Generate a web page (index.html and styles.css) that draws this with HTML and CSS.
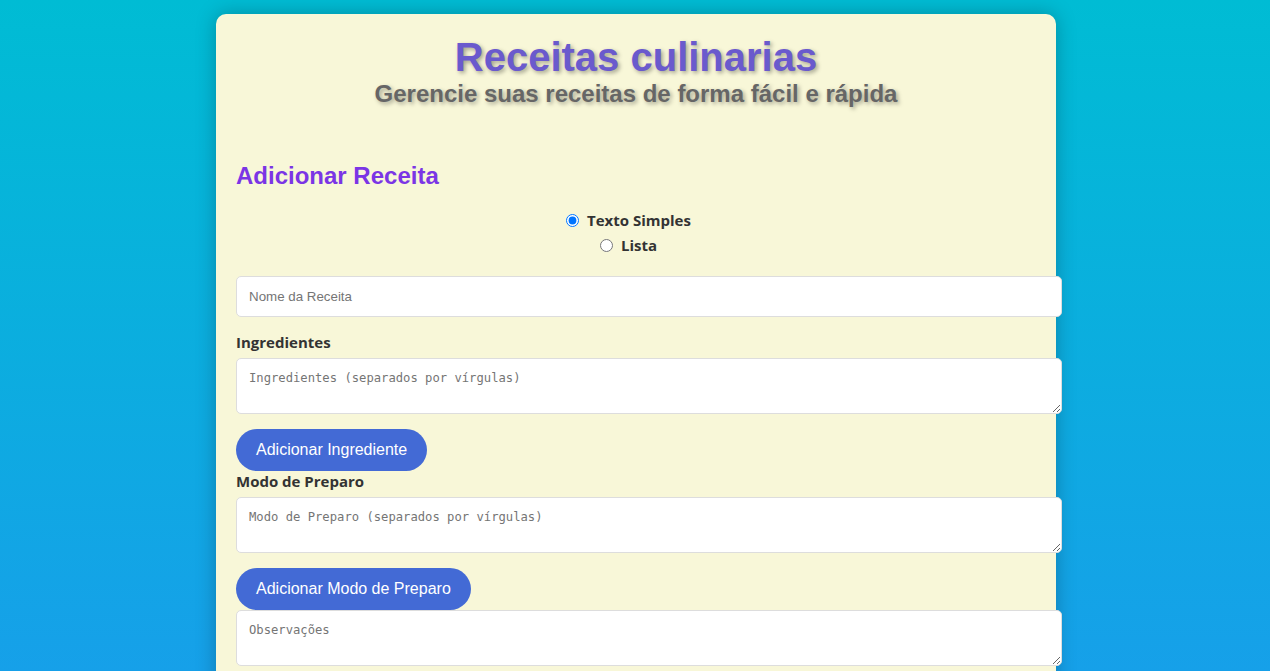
FILE: index.html
```html
<!DOCTYPE html>
<html lang="pt">
<head>
<meta charset="utf-8">
<title>Receitas culinarias</title>
<link rel="stylesheet" href="styles.css">
</head>
<body>
<div class="container">
  <header class="header">
    <h1 class="title">Receitas culinarias</h1>
    <p class="subtitle">Gerencie suas receitas de forma fácil e rápida</p>
  </header>
  <section class="form-section">
    <h2 class="section-title">Adicionar Receita</h2>
    <div class="mode-options">
      <label class="mode-option"><input type="radio" name="mode" checked> Texto Simples</label>
      <label class="mode-option"><input type="radio" name="mode"> Lista</label>
    </div>
    <input class="field" type="text" placeholder="Nome da Receita">
    <label class="field-label">Ingredientes</label>
    <textarea class="field area" placeholder="Ingredientes (separados por vírgulas)"></textarea>
    <button class="btn">Adicionar Ingrediente</button>
    <label class="field-label">Modo de Preparo</label>
    <textarea class="field area" placeholder="Modo de Preparo (separados por vírgulas)"></textarea>
    <button class="btn">Adicionar Modo de Preparo</button>
    <textarea class="field area" placeholder="Observações"></textarea>
  </section>
</div>
</body>
</html>
```
FILE: styles.css
```css
html {
  min-height: 100%;
}
body {
  margin: 0;
  padding-left: 2px;
  min-height: 100vh;
  font-family: "Liberation Sans", Arial, sans-serif;
  background: linear-gradient(to bottom, #00bcd4, #16a0e9) fixed;
}
.container {
  width: 800px;
  margin: 14px auto 0;
  padding: 20px;
  background: #f8f7d8;
  border-radius: 10px;
  box-shadow: 0 0 20px rgba(0, 0, 0, 0.25);
}
.header {
  text-align: center;
  margin-bottom: 54px;
}
.title {
  margin: 0;
  font-size: 40px;
  line-height: 46px;
  font-weight: bold;
  color: #6a5acd;
  text-shadow: 2px 2px 4px rgba(0, 0, 0, 0.35);
}
.subtitle {
  margin: 0;
  font-size: 24px;
  line-height: 28px;
  font-weight: bold;
  color: #666;
  text-shadow: 2px 2px 4px rgba(0, 0, 0, 0.35);
}
.section-title {
  margin: 0 0 20px;
  font-size: 24px;
  line-height: 28px;
  color: #7b35e5;
}
.mode-options {
  display: flex;
  flex-direction: column;
  align-items: center;
  gap: 4px;
  padding-right: 15px;
  margin-bottom: 20px;
}
.mode-option {
  font-family: "Open Sans", sans-serif;
  font-size: 15px;
  line-height: 21px;
  font-weight: bold;
  color: #333;
  display: flex;
  align-items: center;
}
.mode-option input {
  margin: 0 8px 0 0;
  width: 13px;
  height: 13px;
}
.field {
  display: block;
  width: 800px;
  padding: 12px;
  border: 1px solid #ddd;
  border-radius: 5px;
  background: #fff;
  margin: 0 0 15px;
  font-size: 13.333px;
}
.field::placeholder {
  color: #757575;
}
.area {
  font-family: "DejaVu Sans Mono", "Liberation Mono", monospace;
  font-size: 12.2px;
  line-height: 15px;
  height: 30px;
}
.field-label {
  display: block;
  font-family: "Open Sans", sans-serif;
  font-size: 15px;
  line-height: 21px;
  font-weight: bold;
  color: #333;
  margin-bottom: 5px;
}
.btn {
  display: block;
  border: none;
  border-radius: 21px;
  padding: 12px 20px;
  background: #436ad5;
  color: #fff;
  font-family: "Liberation Sans", Arial, sans-serif;
  font-size: 16px;
  line-height: 18px;
}
```
